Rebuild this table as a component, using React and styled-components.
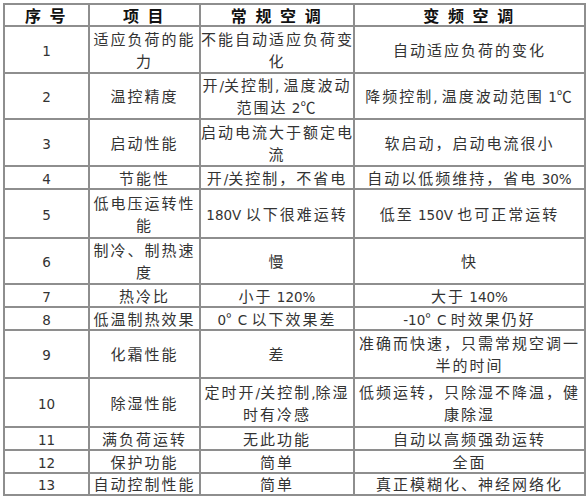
import React from "react";
import styled, { createGlobalStyle } from "styled-components";

const Global = createGlobalStyle`
  html, body { margin: 0; padding: 0; background: #fff; }
  body { font-family: "Noto Sans CJK SC", "Noto Sans", sans-serif; }
`;

const Page = styled.div`
  padding: 3px 0 0 3px;
  width: 586px;
  height: 500px;
  box-sizing: border-box;
  background: #fff;
  overflow: hidden;
`;

const Table = styled.table`
  border-collapse: collapse;
  table-layout: fixed;
  width: 581px;
  border: 2px solid #8e8e8e;
`;

const Col = styled.col`
  width: ${(p) => p.$w}px;
`;

const Row = styled.tr`
  height: ${(p) => p.$h}px;
`;

const HeadCell = styled.th`
  border: 2px solid #8e8e8e;
  padding: 0;
  text-align: center;
  vertical-align: middle;
  font-family: "Noto Sans CJK SC", sans-serif;
  font-weight: 700;
  font-size: 16px;
  letter-spacing: 2.5px;
  line-height: 16px;
  color: #111;
  white-space: pre;
`;

const Cell = styled.td`
  border: 2px solid #8e8e8e;
  padding: 0;
  text-align: center;
  vertical-align: middle;
  font-family: "Noto Sans CJK SC", sans-serif;
  font-weight: 400;
  font-size: 15px;
  letter-spacing: 2px;
  line-height: ${(p) => (p.$multi ? "22px" : "20px")};
  color: #333;
  white-space: pre;
  overflow: hidden;
`;

const Latin = styled.span`
  font-family: "DejaVu Sans", "Liberation Sans", sans-serif;
  font-size: 13.5px;
  line-height: 0;
  letter-spacing: 0;
`;

const header = ["序 号", "项 目", "常 规 空 调", "变 频 空 调"];

const rows = [
  [47, "1", ["适应负荷的能", "力"], ["不能自动适应负荷变", "化"], ["自动适应负荷的变化"]],
  [46, "2", ["温控精度"], ["开/关控制, 温度波动", "范围达 2℃"], ["降频控制, 温度波动范围 1℃"]],
  [47, "3", ["启动性能"], ["启动电流大于额定电", "流"], ["软启动，启动电流很小"]],
  [23, "4", ["节能性"], ["开/关控制，不省电"], ["自动以低频维持，省电 30%"]],
  [49, "5", ["低电压运转性", "能"], ["180V 以下很难运转"], ["低至 150V 也可正常运转"]],
  [45, "6", ["制冷、制热速", "度"], ["慢"], ["快"]],
  [23, "7", ["热冷比"], ["小于 120%"], ["大于 140%"]],
  [23, "8", ["低温制热效果"], ["0° C 以下效果差"], ["-10° C 时效果仍好"]],
  [48, "9", ["化霜性能"], ["差"], ["准确而快速，只需常规空调一", "半的时间"]],
  [49, "10", ["除湿性能"], ["定时开/关控制,除湿", "时有冷感"], ["低频运转，只除湿不降温，健", "康除湿"]],
  [23, "11", ["满负荷运转"], ["无此功能"], ["自动以高频强劲运转"]],
  [23, "12", ["保护功能"], ["简单"], ["全面"]],
  [22, "13", ["自动控制性能"], ["简单"], ["真正模糊化、神经网络化"]],
];

function Text({ s }) {
  const parts = s.split(/([\x20-\x7e]+)/).filter((p) => p !== "");
  return parts.map((p, i) =>
    /^[\x20-\x7e]+$/.test(p) ? <Latin key={i}>{p}</Latin> : <React.Fragment key={i}>{p}</React.Fragment>
  );
}

function TextCell({ lines }) {
  return (
    <Cell $multi={lines.length > 1}>
      {lines.map((l, i) => (
        <React.Fragment key={i}>
          {i > 0 && <br />}
          <Text s={l} />
        </React.Fragment>
      ))}
    </Cell>
  );
}

export default function App() {
  return (
    <Page>
      <Global />
      <Table>
        <colgroup>
          <Col $w={85} />
          <Col $w={111} />
          <Col $w={154} />
          <Col $w={231} />
        </colgroup>
        <thead>
          <Row $h={22}>
            {header.map((h, i) => (
              <HeadCell key={i}>{h}</HeadCell>
            ))}
          </Row>
        </thead>
        <tbody>
          {rows.map(([h, n, a, b, c]) => (
            <Row key={n} $h={h}>
              <Cell><Latin>{n}</Latin></Cell>
              <TextCell lines={a} />
              <TextCell lines={b} />
              <TextCell lines={c} />
            </Row>
          ))}
        </tbody>
      </Table>
    </Page>
  );
}
